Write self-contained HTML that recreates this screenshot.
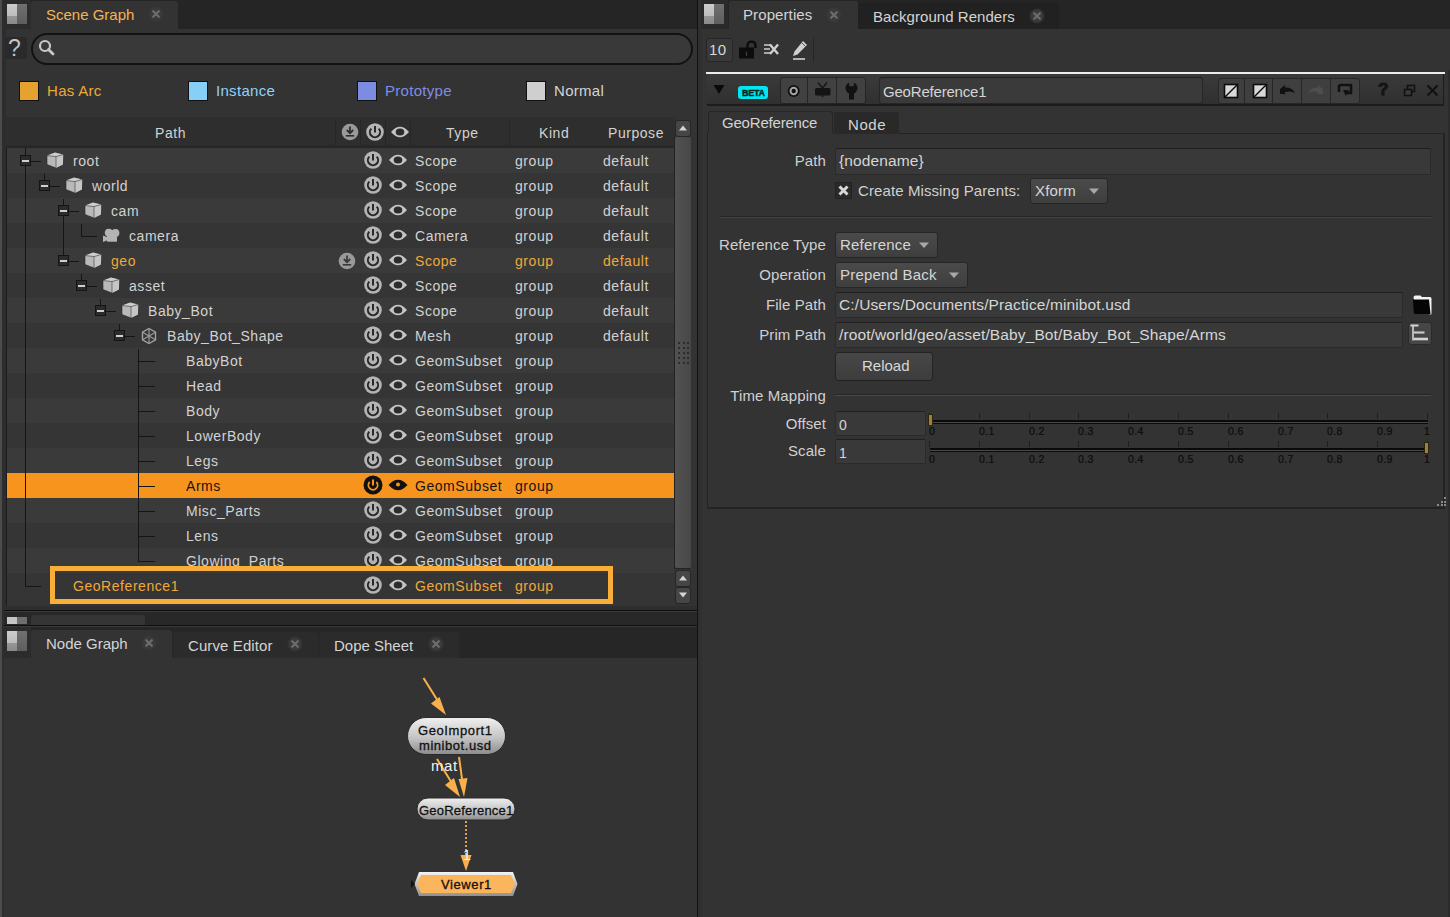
<!DOCTYPE html><html><head><meta charset="utf-8"><style>
*{margin:0;padding:0;box-sizing:border-box}
html,body{width:1450px;height:917px;overflow:hidden;background:#333333}
body{position:relative;font-family:"Liberation Sans", sans-serif;font-size:14px;color:#d2d2d2}
body div{position:absolute}
.t{white-space:pre;line-height:16px;letter-spacing:0.55px}
.s{white-space:pre;line-height:12px;font-size:10.5px;color:#0c0c0c;letter-spacing:0.4px;-webkit-text-stroke:0.2px #0c0c0c}
</style></head><body><div style="left:0px;top:0px;width:2px;height:917px;background:#4c4c4c"></div><div style="left:2px;top:0px;width:4px;height:917px;background:#2d2d2d"></div><div style="left:4px;top:0px;width:693px;height:29px;background:#252525"></div><div style="left:4px;top:0px;width:27px;height:29px;background:#2c2c2c"></div><div style="left:7px;top:4px;width:10px;height:12px;background:linear-gradient(#cdcdcd,#bdbdbd)"></div><div style="left:7px;top:16px;width:10px;height:8px;background:linear-gradient(#969696,#8a8a8a)"></div><div style="left:17px;top:4px;width:10px;height:20px;background:linear-gradient(#707070,#5e5e5e)"></div><div style="left:31px;top:1px;width:147px;height:28px;background:#333333;border-radius:3px 3px 0 0"></div><div class="t" style="left:46px;top:7px;color:#f4b456;font-size:15px;letter-spacing:0px">Scene Graph</div><div style="left:148px;top:6px;width:16px;height:16px;background:radial-gradient(circle,#3a3a3a 50%,transparent 72%);border-radius:8px"></div><svg style="position:absolute;left:152px;top:10px;" width="8" height="8" viewBox="0 0 8 8"><path d="M1.2 1.2L6.8 6.8M6.8 1.2L1.2 6.8" stroke="#6c6c6c" stroke-width="2.2" stroke-linecap="round"/></svg><div style="left:5px;top:37px;width:22px;height:22px;background:#2a2a2a;border-radius:3px"></div><div class="t" style="left:8px;top:37px;color:#c4c4c4;font-size:23px;letter-spacing:0;line-height:22px">?</div><div style="left:31px;top:33px;width:662px;height:32px;background:#393939;border:2px solid #121212;border-radius:16px"></div><svg style="position:absolute;left:38px;top:39px;" width="18" height="18" viewBox="0 0 18 18"><circle cx="7" cy="7" r="5" fill="none" stroke="#c8c8c8" stroke-width="2.2"/><path d="M10.5 10.5L15 15" stroke="#c8c8c8" stroke-width="2.8" stroke-linecap="round"/></svg><div style="left:19px;top:81px;width:20px;height:20px;background:#e6a22e;border:1px solid #111"></div><div class="t" style="left:47px;top:83px;color:#eda838;font-size:15px;letter-spacing:0.3px">Has Arc</div><div style="left:188px;top:81px;width:20px;height:20px;background:#86d0f8;border:1px solid #111"></div><div class="t" style="left:216px;top:83px;color:#8ed2fa;font-size:15px;letter-spacing:0.3px">Instance</div><div style="left:357px;top:81px;width:20px;height:20px;background:#7c8ce0;border:1px solid #111"></div><div class="t" style="left:385px;top:83px;color:#7f8de6;font-size:15px;letter-spacing:0.3px">Prototype</div><div style="left:526px;top:81px;width:20px;height:20px;background:#cfcfcf;border:1px solid #111"></div><div class="t" style="left:554px;top:83px;color:#d4d4d4;font-size:15px;letter-spacing:0.3px">Normal</div><div style="left:6px;top:118px;width:669px;height:488px;background:#353535"></div><div style="left:6px;top:145px;width:1px;height:461px;background:#1c1c1c"></div><div style="left:6px;top:117px;width:669px;height:28px;background:#2e2e2e"></div><div style="left:6px;top:145px;width:669px;height:3px;background:linear-gradient(#2a2a2a,#252525)"></div><div style="left:335px;top:120px;width:1px;height:25px;background:#272727"></div><div style="left:360px;top:120px;width:1px;height:25px;background:#272727"></div><div style="left:385px;top:120px;width:1px;height:25px;background:#272727"></div><div style="left:410px;top:120px;width:1px;height:25px;background:#272727"></div><div style="left:509px;top:120px;width:1px;height:25px;background:#272727"></div><div class="t" style="left:155px;top:125px;">Path</div><div class="t" style="left:446px;top:125px;">Type</div><div class="t" style="left:539px;top:125px;">Kind</div><div class="t" style="left:608px;top:125px;">Purpose</div><div style="left:7px;top:148px;width:667px;height:25px;background:#3a3a3a"></div><div style="left:7px;top:173px;width:667px;height:25px;background:#353535"></div><div style="left:7px;top:198px;width:667px;height:25px;background:#3a3a3a"></div><div style="left:7px;top:223px;width:667px;height:25px;background:#353535"></div><div style="left:7px;top:248px;width:667px;height:25px;background:#3a3a3a"></div><div style="left:7px;top:273px;width:667px;height:25px;background:#353535"></div><div style="left:7px;top:298px;width:667px;height:25px;background:#3a3a3a"></div><div style="left:7px;top:323px;width:667px;height:25px;background:#353535"></div><div style="left:7px;top:348px;width:667px;height:25px;background:#3a3a3a"></div><div style="left:7px;top:373px;width:667px;height:25px;background:#353535"></div><div style="left:7px;top:398px;width:667px;height:25px;background:#3a3a3a"></div><div style="left:7px;top:423px;width:667px;height:25px;background:#353535"></div><div style="left:7px;top:448px;width:667px;height:25px;background:#3a3a3a"></div><div style="left:7px;top:473px;width:667px;height:25px;background:#f7941e"></div><div style="left:7px;top:498px;width:667px;height:25px;background:#3a3a3a"></div><div style="left:7px;top:523px;width:667px;height:25px;background:#353535"></div><div style="left:7px;top:548px;width:667px;height:25px;background:#3a3a3a"></div><div style="left:7px;top:573px;width:667px;height:25px;background:#353535"></div><div style="left:25px;top:148px;width:1px;height:439px;background:#151515"></div><div style="left:25px;top:586px;width:16px;height:1px;background:#151515"></div><div style="left:25px;top:149px;width:1px;height:12px;background:#151515"></div><div style="left:25px;top:161px;width:16px;height:1px;background:#151515"></div><div style="left:44px;top:174px;width:1px;height:12px;background:#151515"></div><div style="left:44px;top:186px;width:16px;height:1px;background:#151515"></div><div style="left:63px;top:199px;width:1px;height:12px;background:#151515"></div><div style="left:63px;top:211px;width:16px;height:1px;background:#151515"></div><div style="left:81px;top:224px;width:1px;height:12px;background:#151515"></div><div style="left:81px;top:236px;width:16px;height:1px;background:#151515"></div><div style="left:63px;top:249px;width:1px;height:12px;background:#151515"></div><div style="left:63px;top:261px;width:16px;height:1px;background:#151515"></div><div style="left:81px;top:274px;width:1px;height:12px;background:#151515"></div><div style="left:81px;top:286px;width:16px;height:1px;background:#151515"></div><div style="left:100px;top:299px;width:1px;height:12px;background:#151515"></div><div style="left:100px;top:311px;width:16px;height:1px;background:#151515"></div><div style="left:119px;top:324px;width:1px;height:12px;background:#151515"></div><div style="left:119px;top:336px;width:16px;height:1px;background:#151515"></div><div style="left:63px;top:211px;width:1px;height:50px;background:#151515"></div><div style="left:81px;top:224px;width:1px;height:13px;background:#151515"></div><div style="left:81px;top:236px;width:16px;height:1px;background:#151515"></div><div style="left:138px;top:349px;width:1px;height:213px;background:#151515"></div><div style="left:138px;top:361px;width:17px;height:1px;background:#151515"></div><div style="left:138px;top:386px;width:17px;height:1px;background:#151515"></div><div style="left:138px;top:411px;width:17px;height:1px;background:#151515"></div><div style="left:138px;top:436px;width:17px;height:1px;background:#151515"></div><div style="left:138px;top:461px;width:17px;height:1px;background:#151515"></div><div style="left:138px;top:486px;width:17px;height:1px;background:#151515"></div><div style="left:138px;top:511px;width:17px;height:1px;background:#151515"></div><div style="left:138px;top:536px;width:17px;height:1px;background:#151515"></div><div style="left:138px;top:561px;width:17px;height:1px;background:#151515"></div><div style="left:20px;top:155px;width:11px;height:11px;background:#2c2c2c;border:1.5px solid #141414"></div><div style="left:22px;top:160px;width:7px;height:2px;background:#cfcfcf"></div><div style="left:39px;top:180px;width:11px;height:11px;background:#2c2c2c;border:1.5px solid #141414"></div><div style="left:41px;top:185px;width:7px;height:2px;background:#cfcfcf"></div><div style="left:58px;top:205px;width:11px;height:11px;background:#2c2c2c;border:1.5px solid #141414"></div><div style="left:60px;top:210px;width:7px;height:2px;background:#cfcfcf"></div><div style="left:58px;top:255px;width:11px;height:11px;background:#2c2c2c;border:1.5px solid #141414"></div><div style="left:60px;top:260px;width:7px;height:2px;background:#cfcfcf"></div><div style="left:76px;top:280px;width:11px;height:11px;background:#2c2c2c;border:1.5px solid #141414"></div><div style="left:78px;top:285px;width:7px;height:2px;background:#cfcfcf"></div><div style="left:95px;top:305px;width:11px;height:11px;background:#2c2c2c;border:1.5px solid #141414"></div><div style="left:97px;top:310px;width:7px;height:2px;background:#cfcfcf"></div><div style="left:114px;top:330px;width:11px;height:11px;background:#2c2c2c;border:1.5px solid #141414"></div><div style="left:116px;top:335px;width:7px;height:2px;background:#cfcfcf"></div><svg style="position:absolute;left:46px;top:152px;" width="18" height="18" viewBox="0 0 18 18"><path d="M1 3.5L9 0.5L17.2 2.5L17 12.5L10 16L1 12.5Z" fill="#b9b9b9" stroke="#2a2a2a" stroke-width="0.6"/><path d="M1 3.5L9 0.5L17.2 2.5L10 4.6Z" fill="#cdcdcd"/><path d="M10 4.6L17.2 2.5L17 12.5L10 16Z" fill="#c6c6c6"/><path d="M1 3.5L10 4.6L17.2 2.5M10 4.6V16" fill="none" stroke="#4a4a4a" stroke-width="0.7"/></svg><div class="t" style="left:73px;top:153px;color:#d2d2d2">root</div><div class="t" style="left:415px;top:153px;color:#d2d2d2">Scope</div><div class="t" style="left:515px;top:153px;color:#d2d2d2">group</div><div class="t" style="left:603px;top:153px;color:#d2d2d2">default</div><svg style="position:absolute;left:363px;top:150px;" width="20" height="20" viewBox="0 0 20 20"><circle cx="10" cy="10" r="8.8" fill="#b4b4b4"/><path d="M6.3 6.6A5.1 5.1 0 1 0 13.7 6.6" fill="none" stroke="#282828" stroke-width="2"/><path d="M10 4V10.5" stroke="#282828" stroke-width="2"/></svg><svg style="position:absolute;left:388px;top:153px;" width="20" height="14" viewBox="0 0 20 14"><path d="M1 7Q10 -3.5 19 7Q10 17.5 1 7Z" fill="#c4c4c4"/><ellipse cx="10" cy="7" rx="4.3" ry="3.6" fill="#2c2c2c"/></svg><svg style="position:absolute;left:65px;top:177px;" width="18" height="18" viewBox="0 0 18 18"><path d="M1 3.5L9 0.5L17.2 2.5L17 12.5L10 16L1 12.5Z" fill="#b9b9b9" stroke="#2a2a2a" stroke-width="0.6"/><path d="M1 3.5L9 0.5L17.2 2.5L10 4.6Z" fill="#cdcdcd"/><path d="M10 4.6L17.2 2.5L17 12.5L10 16Z" fill="#c6c6c6"/><path d="M1 3.5L10 4.6L17.2 2.5M10 4.6V16" fill="none" stroke="#4a4a4a" stroke-width="0.7"/></svg><div class="t" style="left:92px;top:178px;color:#d2d2d2">world</div><div class="t" style="left:415px;top:178px;color:#d2d2d2">Scope</div><div class="t" style="left:515px;top:178px;color:#d2d2d2">group</div><div class="t" style="left:603px;top:178px;color:#d2d2d2">default</div><svg style="position:absolute;left:363px;top:175px;" width="20" height="20" viewBox="0 0 20 20"><circle cx="10" cy="10" r="8.8" fill="#b4b4b4"/><path d="M6.3 6.6A5.1 5.1 0 1 0 13.7 6.6" fill="none" stroke="#282828" stroke-width="2"/><path d="M10 4V10.5" stroke="#282828" stroke-width="2"/></svg><svg style="position:absolute;left:388px;top:178px;" width="20" height="14" viewBox="0 0 20 14"><path d="M1 7Q10 -3.5 19 7Q10 17.5 1 7Z" fill="#c4c4c4"/><ellipse cx="10" cy="7" rx="4.3" ry="3.6" fill="#2c2c2c"/></svg><svg style="position:absolute;left:84px;top:202px;" width="18" height="18" viewBox="0 0 18 18"><path d="M1 3.5L9 0.5L17.2 2.5L17 12.5L10 16L1 12.5Z" fill="#b9b9b9" stroke="#2a2a2a" stroke-width="0.6"/><path d="M1 3.5L9 0.5L17.2 2.5L10 4.6Z" fill="#cdcdcd"/><path d="M10 4.6L17.2 2.5L17 12.5L10 16Z" fill="#c6c6c6"/><path d="M1 3.5L10 4.6L17.2 2.5M10 4.6V16" fill="none" stroke="#4a4a4a" stroke-width="0.7"/></svg><div class="t" style="left:111px;top:203px;color:#d2d2d2">cam</div><div class="t" style="left:415px;top:203px;color:#d2d2d2">Scope</div><div class="t" style="left:515px;top:203px;color:#d2d2d2">group</div><div class="t" style="left:603px;top:203px;color:#d2d2d2">default</div><svg style="position:absolute;left:363px;top:200px;" width="20" height="20" viewBox="0 0 20 20"><circle cx="10" cy="10" r="8.8" fill="#b4b4b4"/><path d="M6.3 6.6A5.1 5.1 0 1 0 13.7 6.6" fill="none" stroke="#282828" stroke-width="2"/><path d="M10 4V10.5" stroke="#282828" stroke-width="2"/></svg><svg style="position:absolute;left:388px;top:203px;" width="20" height="14" viewBox="0 0 20 14"><path d="M1 7Q10 -3.5 19 7Q10 17.5 1 7Z" fill="#c4c4c4"/><ellipse cx="10" cy="7" rx="4.3" ry="3.6" fill="#2c2c2c"/></svg><svg style="position:absolute;left:102px;top:227px;" width="18" height="18" viewBox="0 0 18 18"><circle cx="6.8" cy="5.8" r="4" fill="#b4b4b4"/><circle cx="13.4" cy="6" r="4" fill="#b4b4b4"/><rect x="5" y="7.5" width="10" height="7.2" fill="#b4b4b4"/><path d="M1 8.5L6 10.5V13L1 15Z" fill="#b4b4b4"/></svg><div class="t" style="left:129px;top:228px;color:#d2d2d2">camera</div><div class="t" style="left:415px;top:228px;color:#d2d2d2">Camera</div><div class="t" style="left:515px;top:228px;color:#d2d2d2">group</div><div class="t" style="left:603px;top:228px;color:#d2d2d2">default</div><svg style="position:absolute;left:363px;top:225px;" width="20" height="20" viewBox="0 0 20 20"><circle cx="10" cy="10" r="8.8" fill="#b4b4b4"/><path d="M6.3 6.6A5.1 5.1 0 1 0 13.7 6.6" fill="none" stroke="#282828" stroke-width="2"/><path d="M10 4V10.5" stroke="#282828" stroke-width="2"/></svg><svg style="position:absolute;left:388px;top:228px;" width="20" height="14" viewBox="0 0 20 14"><path d="M1 7Q10 -3.5 19 7Q10 17.5 1 7Z" fill="#c4c4c4"/><ellipse cx="10" cy="7" rx="4.3" ry="3.6" fill="#2c2c2c"/></svg><svg style="position:absolute;left:84px;top:252px;" width="18" height="18" viewBox="0 0 18 18"><path d="M1 3.5L9 0.5L17.2 2.5L17 12.5L10 16L1 12.5Z" fill="#b9b9b9" stroke="#2a2a2a" stroke-width="0.6"/><path d="M1 3.5L9 0.5L17.2 2.5L10 4.6Z" fill="#cdcdcd"/><path d="M10 4.6L17.2 2.5L17 12.5L10 16Z" fill="#c6c6c6"/><path d="M1 3.5L10 4.6L17.2 2.5M10 4.6V16" fill="none" stroke="#4a4a4a" stroke-width="0.7"/></svg><div class="t" style="left:111px;top:253px;color:#f0a83a">geo</div><div class="t" style="left:415px;top:253px;color:#f0a83a">Scope</div><div class="t" style="left:515px;top:253px;color:#f0a83a">group</div><div class="t" style="left:603px;top:253px;color:#f0a83a">default</div><svg style="position:absolute;left:363px;top:250px;" width="20" height="20" viewBox="0 0 20 20"><circle cx="10" cy="10" r="8.8" fill="#b4b4b4"/><path d="M6.3 6.6A5.1 5.1 0 1 0 13.7 6.6" fill="none" stroke="#282828" stroke-width="2"/><path d="M10 4V10.5" stroke="#282828" stroke-width="2"/></svg><svg style="position:absolute;left:388px;top:253px;" width="20" height="14" viewBox="0 0 20 14"><path d="M1 7Q10 -3.5 19 7Q10 17.5 1 7Z" fill="#c4c4c4"/><ellipse cx="10" cy="7" rx="4.3" ry="3.6" fill="#2c2c2c"/></svg><svg style="position:absolute;left:102px;top:277px;" width="18" height="18" viewBox="0 0 18 18"><path d="M1 3.5L9 0.5L17.2 2.5L17 12.5L10 16L1 12.5Z" fill="#b9b9b9" stroke="#2a2a2a" stroke-width="0.6"/><path d="M1 3.5L9 0.5L17.2 2.5L10 4.6Z" fill="#cdcdcd"/><path d="M10 4.6L17.2 2.5L17 12.5L10 16Z" fill="#c6c6c6"/><path d="M1 3.5L10 4.6L17.2 2.5M10 4.6V16" fill="none" stroke="#4a4a4a" stroke-width="0.7"/></svg><div class="t" style="left:129px;top:278px;color:#d2d2d2">asset</div><div class="t" style="left:415px;top:278px;color:#d2d2d2">Scope</div><div class="t" style="left:515px;top:278px;color:#d2d2d2">group</div><div class="t" style="left:603px;top:278px;color:#d2d2d2">default</div><svg style="position:absolute;left:363px;top:275px;" width="20" height="20" viewBox="0 0 20 20"><circle cx="10" cy="10" r="8.8" fill="#b4b4b4"/><path d="M6.3 6.6A5.1 5.1 0 1 0 13.7 6.6" fill="none" stroke="#282828" stroke-width="2"/><path d="M10 4V10.5" stroke="#282828" stroke-width="2"/></svg><svg style="position:absolute;left:388px;top:278px;" width="20" height="14" viewBox="0 0 20 14"><path d="M1 7Q10 -3.5 19 7Q10 17.5 1 7Z" fill="#c4c4c4"/><ellipse cx="10" cy="7" rx="4.3" ry="3.6" fill="#2c2c2c"/></svg><svg style="position:absolute;left:121px;top:302px;" width="18" height="18" viewBox="0 0 18 18"><path d="M1 3.5L9 0.5L17.2 2.5L17 12.5L10 16L1 12.5Z" fill="#b9b9b9" stroke="#2a2a2a" stroke-width="0.6"/><path d="M1 3.5L9 0.5L17.2 2.5L10 4.6Z" fill="#cdcdcd"/><path d="M10 4.6L17.2 2.5L17 12.5L10 16Z" fill="#c6c6c6"/><path d="M1 3.5L10 4.6L17.2 2.5M10 4.6V16" fill="none" stroke="#4a4a4a" stroke-width="0.7"/></svg><div class="t" style="left:148px;top:303px;color:#d2d2d2">Baby_Bot</div><div class="t" style="left:415px;top:303px;color:#d2d2d2">Scope</div><div class="t" style="left:515px;top:303px;color:#d2d2d2">group</div><div class="t" style="left:603px;top:303px;color:#d2d2d2">default</div><svg style="position:absolute;left:363px;top:300px;" width="20" height="20" viewBox="0 0 20 20"><circle cx="10" cy="10" r="8.8" fill="#b4b4b4"/><path d="M6.3 6.6A5.1 5.1 0 1 0 13.7 6.6" fill="none" stroke="#282828" stroke-width="2"/><path d="M10 4V10.5" stroke="#282828" stroke-width="2"/></svg><svg style="position:absolute;left:388px;top:303px;" width="20" height="14" viewBox="0 0 20 14"><path d="M1 7Q10 -3.5 19 7Q10 17.5 1 7Z" fill="#c4c4c4"/><ellipse cx="10" cy="7" rx="4.3" ry="3.6" fill="#2c2c2c"/></svg><svg style="position:absolute;left:140px;top:327px;" width="18" height="18" viewBox="0 0 18 18"><path d="M9 1.5L15.5 5.2V12.8L9 16.5L2.5 12.8V5.2Z" fill="none" stroke="#a0a0a0" stroke-width="1.4"/><path d="M9 1.5V16.5M2.5 5.2L15.5 12.8M15.5 5.2L2.5 12.8" stroke="#9a9a9a" stroke-width="1.2"/></svg><div class="t" style="left:167px;top:328px;color:#d2d2d2">Baby_Bot_Shape</div><div class="t" style="left:415px;top:328px;color:#d2d2d2">Mesh</div><div class="t" style="left:515px;top:328px;color:#d2d2d2">group</div><div class="t" style="left:603px;top:328px;color:#d2d2d2">default</div><svg style="position:absolute;left:363px;top:325px;" width="20" height="20" viewBox="0 0 20 20"><circle cx="10" cy="10" r="8.8" fill="#b4b4b4"/><path d="M6.3 6.6A5.1 5.1 0 1 0 13.7 6.6" fill="none" stroke="#282828" stroke-width="2"/><path d="M10 4V10.5" stroke="#282828" stroke-width="2"/></svg><svg style="position:absolute;left:388px;top:328px;" width="20" height="14" viewBox="0 0 20 14"><path d="M1 7Q10 -3.5 19 7Q10 17.5 1 7Z" fill="#c4c4c4"/><ellipse cx="10" cy="7" rx="4.3" ry="3.6" fill="#2c2c2c"/></svg><div class="t" style="left:186px;top:353px;color:#d2d2d2">BabyBot</div><div class="t" style="left:415px;top:353px;color:#d2d2d2">GeomSubset</div><div class="t" style="left:515px;top:353px;color:#d2d2d2">group</div><svg style="position:absolute;left:363px;top:350px;" width="20" height="20" viewBox="0 0 20 20"><circle cx="10" cy="10" r="8.8" fill="#b4b4b4"/><path d="M6.3 6.6A5.1 5.1 0 1 0 13.7 6.6" fill="none" stroke="#282828" stroke-width="2"/><path d="M10 4V10.5" stroke="#282828" stroke-width="2"/></svg><svg style="position:absolute;left:388px;top:353px;" width="20" height="14" viewBox="0 0 20 14"><path d="M1 7Q10 -3.5 19 7Q10 17.5 1 7Z" fill="#c4c4c4"/><ellipse cx="10" cy="7" rx="4.3" ry="3.6" fill="#2c2c2c"/></svg><div class="t" style="left:186px;top:378px;color:#d2d2d2">Head</div><div class="t" style="left:415px;top:378px;color:#d2d2d2">GeomSubset</div><div class="t" style="left:515px;top:378px;color:#d2d2d2">group</div><svg style="position:absolute;left:363px;top:375px;" width="20" height="20" viewBox="0 0 20 20"><circle cx="10" cy="10" r="8.8" fill="#b4b4b4"/><path d="M6.3 6.6A5.1 5.1 0 1 0 13.7 6.6" fill="none" stroke="#282828" stroke-width="2"/><path d="M10 4V10.5" stroke="#282828" stroke-width="2"/></svg><svg style="position:absolute;left:388px;top:378px;" width="20" height="14" viewBox="0 0 20 14"><path d="M1 7Q10 -3.5 19 7Q10 17.5 1 7Z" fill="#c4c4c4"/><ellipse cx="10" cy="7" rx="4.3" ry="3.6" fill="#2c2c2c"/></svg><div class="t" style="left:186px;top:403px;color:#d2d2d2">Body</div><div class="t" style="left:415px;top:403px;color:#d2d2d2">GeomSubset</div><div class="t" style="left:515px;top:403px;color:#d2d2d2">group</div><svg style="position:absolute;left:363px;top:400px;" width="20" height="20" viewBox="0 0 20 20"><circle cx="10" cy="10" r="8.8" fill="#b4b4b4"/><path d="M6.3 6.6A5.1 5.1 0 1 0 13.7 6.6" fill="none" stroke="#282828" stroke-width="2"/><path d="M10 4V10.5" stroke="#282828" stroke-width="2"/></svg><svg style="position:absolute;left:388px;top:403px;" width="20" height="14" viewBox="0 0 20 14"><path d="M1 7Q10 -3.5 19 7Q10 17.5 1 7Z" fill="#c4c4c4"/><ellipse cx="10" cy="7" rx="4.3" ry="3.6" fill="#2c2c2c"/></svg><div class="t" style="left:186px;top:428px;color:#d2d2d2">LowerBody</div><div class="t" style="left:415px;top:428px;color:#d2d2d2">GeomSubset</div><div class="t" style="left:515px;top:428px;color:#d2d2d2">group</div><svg style="position:absolute;left:363px;top:425px;" width="20" height="20" viewBox="0 0 20 20"><circle cx="10" cy="10" r="8.8" fill="#b4b4b4"/><path d="M6.3 6.6A5.1 5.1 0 1 0 13.7 6.6" fill="none" stroke="#282828" stroke-width="2"/><path d="M10 4V10.5" stroke="#282828" stroke-width="2"/></svg><svg style="position:absolute;left:388px;top:428px;" width="20" height="14" viewBox="0 0 20 14"><path d="M1 7Q10 -3.5 19 7Q10 17.5 1 7Z" fill="#c4c4c4"/><ellipse cx="10" cy="7" rx="4.3" ry="3.6" fill="#2c2c2c"/></svg><div class="t" style="left:186px;top:453px;color:#d2d2d2">Legs</div><div class="t" style="left:415px;top:453px;color:#d2d2d2">GeomSubset</div><div class="t" style="left:515px;top:453px;color:#d2d2d2">group</div><svg style="position:absolute;left:363px;top:450px;" width="20" height="20" viewBox="0 0 20 20"><circle cx="10" cy="10" r="8.8" fill="#b4b4b4"/><path d="M6.3 6.6A5.1 5.1 0 1 0 13.7 6.6" fill="none" stroke="#282828" stroke-width="2"/><path d="M10 4V10.5" stroke="#282828" stroke-width="2"/></svg><svg style="position:absolute;left:388px;top:453px;" width="20" height="14" viewBox="0 0 20 14"><path d="M1 7Q10 -3.5 19 7Q10 17.5 1 7Z" fill="#c4c4c4"/><ellipse cx="10" cy="7" rx="4.3" ry="3.6" fill="#2c2c2c"/></svg><div class="t" style="left:186px;top:478px;color:#151515">Arms</div><div class="t" style="left:415px;top:478px;color:#151515">GeomSubset</div><div class="t" style="left:515px;top:478px;color:#151515">group</div><svg style="position:absolute;left:363px;top:475px;" width="20" height="20" viewBox="0 0 20 20"><circle cx="10" cy="10" r="9.5" fill="#111"/><path d="M6.7 7A4.6 4.6 0 1 0 13.3 7" fill="none" stroke="#f7941e" stroke-width="1.8"/><path d="M10 4.5V10.5" stroke="#f7941e" stroke-width="2"/></svg><svg style="position:absolute;left:388px;top:478px;" width="20" height="14" viewBox="0 0 20 14"><path d="M0.5 7Q10 -3.5 19.5 7Q10 17.5 0.5 7Z" fill="#111"/><circle cx="10" cy="6.5" r="2" fill="#f7941e"/></svg><div class="t" style="left:186px;top:503px;color:#d2d2d2">Misc_Parts</div><div class="t" style="left:415px;top:503px;color:#d2d2d2">GeomSubset</div><div class="t" style="left:515px;top:503px;color:#d2d2d2">group</div><svg style="position:absolute;left:363px;top:500px;" width="20" height="20" viewBox="0 0 20 20"><circle cx="10" cy="10" r="8.8" fill="#b4b4b4"/><path d="M6.3 6.6A5.1 5.1 0 1 0 13.7 6.6" fill="none" stroke="#282828" stroke-width="2"/><path d="M10 4V10.5" stroke="#282828" stroke-width="2"/></svg><svg style="position:absolute;left:388px;top:503px;" width="20" height="14" viewBox="0 0 20 14"><path d="M1 7Q10 -3.5 19 7Q10 17.5 1 7Z" fill="#c4c4c4"/><ellipse cx="10" cy="7" rx="4.3" ry="3.6" fill="#2c2c2c"/></svg><div class="t" style="left:186px;top:528px;color:#d2d2d2">Lens</div><div class="t" style="left:415px;top:528px;color:#d2d2d2">GeomSubset</div><div class="t" style="left:515px;top:528px;color:#d2d2d2">group</div><svg style="position:absolute;left:363px;top:525px;" width="20" height="20" viewBox="0 0 20 20"><circle cx="10" cy="10" r="8.8" fill="#b4b4b4"/><path d="M6.3 6.6A5.1 5.1 0 1 0 13.7 6.6" fill="none" stroke="#282828" stroke-width="2"/><path d="M10 4V10.5" stroke="#282828" stroke-width="2"/></svg><svg style="position:absolute;left:388px;top:528px;" width="20" height="14" viewBox="0 0 20 14"><path d="M1 7Q10 -3.5 19 7Q10 17.5 1 7Z" fill="#c4c4c4"/><ellipse cx="10" cy="7" rx="4.3" ry="3.6" fill="#2c2c2c"/></svg><div class="t" style="left:186px;top:553px;color:#d2d2d2">Glowing_Parts</div><div class="t" style="left:415px;top:553px;color:#d2d2d2">GeomSubset</div><div class="t" style="left:515px;top:553px;color:#d2d2d2">group</div><svg style="position:absolute;left:363px;top:550px;" width="20" height="20" viewBox="0 0 20 20"><circle cx="10" cy="10" r="8.8" fill="#b4b4b4"/><path d="M6.3 6.6A5.1 5.1 0 1 0 13.7 6.6" fill="none" stroke="#282828" stroke-width="2"/><path d="M10 4V10.5" stroke="#282828" stroke-width="2"/></svg><svg style="position:absolute;left:388px;top:553px;" width="20" height="14" viewBox="0 0 20 14"><path d="M1 7Q10 -3.5 19 7Q10 17.5 1 7Z" fill="#c4c4c4"/><ellipse cx="10" cy="7" rx="4.3" ry="3.6" fill="#2c2c2c"/></svg><div class="t" style="left:73px;top:578px;color:#f0a83a">GeoReference1</div><div class="t" style="left:415px;top:578px;color:#f0a83a">GeomSubset</div><div class="t" style="left:515px;top:578px;color:#f0a83a">group</div><svg style="position:absolute;left:363px;top:575px;" width="20" height="20" viewBox="0 0 20 20"><circle cx="10" cy="10" r="8.8" fill="#b4b4b4"/><path d="M6.3 6.6A5.1 5.1 0 1 0 13.7 6.6" fill="none" stroke="#282828" stroke-width="2"/><path d="M10 4V10.5" stroke="#282828" stroke-width="2"/></svg><svg style="position:absolute;left:388px;top:578px;" width="20" height="14" viewBox="0 0 20 14"><path d="M1 7Q10 -3.5 19 7Q10 17.5 1 7Z" fill="#c4c4c4"/><ellipse cx="10" cy="7" rx="4.3" ry="3.6" fill="#2c2c2c"/></svg><svg style="position:absolute;left:340px;top:122px;" width="20" height="20" viewBox="0 0 20 20"><circle cx="10" cy="10" r="8.3" fill="#9a9a9a"/><path d="M10 4.5V11M6.8 8L10 11.2L13.2 8" fill="none" stroke="#2e2e2e" stroke-width="1.8"/><path d="M5.8 13.8H14.2" stroke="#2e2e2e" stroke-width="1.6"/></svg><svg style="position:absolute;left:365px;top:122px;" width="20" height="20" viewBox="0 0 20 20"><circle cx="10" cy="10" r="8.8" fill="#b4b4b4"/><path d="M6.3 6.6A5.1 5.1 0 1 0 13.7 6.6" fill="none" stroke="#282828" stroke-width="2"/><path d="M10 4V10.5" stroke="#282828" stroke-width="2"/></svg><svg style="position:absolute;left:390px;top:125px;" width="20" height="14" viewBox="0 0 20 14"><path d="M1 7Q10 -3.5 19 7Q10 17.5 1 7Z" fill="#c4c4c4"/><ellipse cx="10" cy="7" rx="4.3" ry="3.6" fill="#2c2c2c"/></svg><svg style="position:absolute;left:337px;top:251px;" width="20" height="20" viewBox="0 0 20 20"><circle cx="10" cy="10" r="8.3" fill="#9a9a9a"/><path d="M10 4.5V11M6.8 8L10 11.2L13.2 8" fill="none" stroke="#3a3a3a" stroke-width="1.8"/><path d="M5.8 13.8H14.2" stroke="#3a3a3a" stroke-width="1.6"/></svg><div style="left:50px;top:566px;width:563px;height:38px;border:5px solid #f9ae3a"></div><div style="left:675px;top:120px;width:16px;height:17px;background:#464646;border-radius:3px;border:1px solid #262626"></div><svg style="position:absolute;left:677px;top:122px;" width="12" height="12" viewBox="0 0 12 12"><path d="M2 8.5L6 3.5L10 8.5Z" fill="#d4d4d4"/></svg><div style="left:674px;top:137px;width:1px;height:432px;background:#222"></div><div style="left:675px;top:137px;width:16px;height:432px;background:linear-gradient(90deg,#525252,#474747);border-radius:2px;border-bottom:1px solid #222"></div><div style="left:678px;top:342px;width:2px;height:2px;background:#2c2c2c"></div><div style="left:683px;top:342px;width:2px;height:2px;background:#2c2c2c"></div><div style="left:687px;top:342px;width:2px;height:2px;background:#2c2c2c"></div><div style="left:678px;top:347px;width:2px;height:2px;background:#2c2c2c"></div><div style="left:683px;top:347px;width:2px;height:2px;background:#2c2c2c"></div><div style="left:687px;top:347px;width:2px;height:2px;background:#2c2c2c"></div><div style="left:678px;top:352px;width:2px;height:2px;background:#2c2c2c"></div><div style="left:683px;top:352px;width:2px;height:2px;background:#2c2c2c"></div><div style="left:687px;top:352px;width:2px;height:2px;background:#2c2c2c"></div><div style="left:678px;top:357px;width:2px;height:2px;background:#2c2c2c"></div><div style="left:683px;top:357px;width:2px;height:2px;background:#2c2c2c"></div><div style="left:687px;top:357px;width:2px;height:2px;background:#2c2c2c"></div><div style="left:678px;top:362px;width:2px;height:2px;background:#2c2c2c"></div><div style="left:683px;top:362px;width:2px;height:2px;background:#2c2c2c"></div><div style="left:687px;top:362px;width:2px;height:2px;background:#2c2c2c"></div><div style="left:675px;top:570px;width:16px;height:17px;background:#464646;border-radius:3px;border:1px solid #262626"></div><svg style="position:absolute;left:677px;top:572px;" width="12" height="12" viewBox="0 0 12 12"><path d="M2 8.5L6 3.5L10 8.5Z" fill="#d4d4d4"/></svg><div style="left:675px;top:587px;width:16px;height:17px;background:#464646;border-radius:3px;border:1px solid #262626"></div><svg style="position:absolute;left:677px;top:589px;" width="12" height="12" viewBox="0 0 12 12"><path d="M2 3.5L6 8.5L10 3.5Z" fill="#d4d4d4"/></svg><div style="left:4px;top:606px;width:693px;height:4px;background:#2e2e2e"></div><div style="left:4px;top:610px;width:693px;height:1px;background:#0e0e0e"></div><div style="left:4px;top:611px;width:693px;height:1px;background:#3a3a3a"></div><div style="left:4px;top:612px;width:693px;height:13px;background:#282828"></div><div style="left:7px;top:617px;width:10px;height:7px;background:#c6c6c6"></div><div style="left:17px;top:617px;width:10px;height:7px;background:#6e6e6e"></div><div style="left:31px;top:615px;width:114px;height:10px;background:#353535;border-radius:3px 3px 0 0"></div><div style="left:4px;top:625px;width:693px;height:1px;background:#0e0e0e"></div><div style="left:4px;top:626px;width:693px;height:1px;background:#3a3a3a"></div><div style="left:4px;top:627px;width:693px;height:31px;background:#262626"></div><div style="left:4px;top:627px;width:27px;height:31px;background:#2c2c2c"></div><div style="left:7px;top:631px;width:10px;height:12px;background:linear-gradient(#cdcdcd,#bdbdbd)"></div><div style="left:7px;top:643px;width:10px;height:8px;background:linear-gradient(#969696,#8a8a8a)"></div><div style="left:17px;top:631px;width:10px;height:20px;background:linear-gradient(#707070,#5e5e5e)"></div><div style="left:31px;top:630px;width:141px;height:28px;background:#333333;border-radius:3px 3px 0 0"></div><div class="t" style="left:46px;top:636px;color:#d4d4d4;font-size:15px;letter-spacing:0px">Node Graph</div><div style="left:141px;top:635px;width:16px;height:16px;background:radial-gradient(circle,#3a3a3a 50%,transparent 72%);border-radius:8px"></div><svg style="position:absolute;left:145px;top:639px;" width="8" height="8" viewBox="0 0 8 8"><path d="M1.2 1.2L6.8 6.8M6.8 1.2L1.2 6.8" stroke="#6c6c6c" stroke-width="2.2" stroke-linecap="round"/></svg><div style="left:173px;top:632px;width:145px;height:26px;background:#2b2b2b;border-radius:3px 3px 0 0"></div><div class="t" style="left:188px;top:638px;color:#d4d4d4;font-size:15px;letter-spacing:0.1px">Curve Editor</div><div style="left:287px;top:636px;width:16px;height:16px;background:radial-gradient(circle,#3a3a3a 50%,transparent 72%);border-radius:8px"></div><svg style="position:absolute;left:291px;top:640px;" width="8" height="8" viewBox="0 0 8 8"><path d="M1.2 1.2L6.8 6.8M6.8 1.2L1.2 6.8" stroke="#6c6c6c" stroke-width="2.2" stroke-linecap="round"/></svg><div style="left:319px;top:632px;width:140px;height:26px;background:#2b2b2b;border-radius:3px 3px 0 0"></div><div class="t" style="left:334px;top:638px;color:#d4d4d4;font-size:15px;letter-spacing:0px">Dope Sheet</div><div style="left:428px;top:636px;width:16px;height:16px;background:radial-gradient(circle,#3a3a3a 50%,transparent 72%);border-radius:8px"></div><svg style="position:absolute;left:432px;top:640px;" width="8" height="8" viewBox="0 0 8 8"><path d="M1.2 1.2L6.8 6.8M6.8 1.2L1.2 6.8" stroke="#6c6c6c" stroke-width="2.2" stroke-linecap="round"/></svg><div style="left:4px;top:658px;width:693px;height:259px;background:#333333"></div><svg style="position:absolute;left:405px;top:670px;" width="120" height="240" viewBox="0 0 120 240">
<defs>
<linearGradient id="ng" x1="0" y1="0" x2="0" y2="1"><stop offset="0" stop-color="#f0f0f0"/><stop offset="0.55" stop-color="#c4c4c4"/><stop offset="1" stop-color="#8c8c8c"/></linearGradient>
<linearGradient id="vg" x1="0" y1="0" x2="0" y2="1"><stop offset="0" stop-color="#f4f4f4"/><stop offset="1" stop-color="#909090"/></linearGradient>
</defs>
<path d="M18.5 8L36 36" stroke="#f9b04c" stroke-width="2"/>
<path d="M34.5 27L41 45L26 33.5Z" fill="#f9b04c"/>
<rect x="2.5" y="47.5" width="98" height="37" rx="18.5" fill="url(#ng)" stroke="#2a2a2a" stroke-width="1"/>
<path d="M32 89L50 118" stroke="#f9b04c" stroke-width="2"/>
<path d="M49 108L55 127L40 115Z" fill="#f9b04c"/>
<path d="M54 87L58 116" stroke="#f9b04c" stroke-width="2"/>
<path d="M53.5 109L62.5 108L59 127Z" fill="#f9b04c"/>
<rect x="12" y="128" width="98" height="22" rx="11" fill="url(#ng)" stroke="#2a2a2a" stroke-width="1"/>
<path d="M61 151V188" stroke="#e0a050" stroke-width="2" stroke-dasharray="2 2"/>
<path d="M55.5 185L66.5 185L61 201Z" fill="#f9b04c"/>
<path d="M14 202H108L112.5 214L108 226H14L9.5 214Z" fill="url(#vg)"/>
<path d="M16 205H106L110 214L106 223H16L12 214Z" fill="#fbb55c"/>
<path d="M6 210L10 214L6 218Z" fill="#111"/>
</svg><div class="t" style="left:418px;top:724px;color:#111;font-size:13px;letter-spacing:0.6px;line-height:14px;-webkit-text-stroke:0.3px #111">GeoImport1</div><div class="t" style="left:419px;top:739px;color:#111;font-size:13px;letter-spacing:0.55px;line-height:14px;-webkit-text-stroke:0.3px #111">minibot.usd</div><div class="t" style="left:431px;top:758px;color:#f4f4f4;font-size:15px;letter-spacing:0.6px;line-height:16px">mat</div><div class="t" style="left:419px;top:804px;color:#111;font-size:13px;letter-spacing:0.2px;line-height:14px;-webkit-text-stroke:0.3px #111">GeoReference1</div><div class="t" style="left:463px;top:848px;color:#f4f4f4;font-size:14px;letter-spacing:0;line-height:14px">1</div><div class="t" style="left:441px;top:878px;color:#111;font-size:13px;letter-spacing:0.6px;line-height:14px;-webkit-text-stroke:0.3px #111">Viewer1</div><div style="left:697px;top:0px;width:1px;height:917px;background:#111"></div><div style="left:698px;top:0px;width:4px;height:917px;background:#303030"></div><div style="left:702px;top:0px;width:748px;height:29px;background:#252525"></div><div style="left:701px;top:0px;width:27px;height:29px;background:#2a2a2a"></div><div style="left:704px;top:4px;width:10px;height:12px;background:linear-gradient(#cdcdcd,#bdbdbd)"></div><div style="left:704px;top:16px;width:10px;height:8px;background:linear-gradient(#969696,#8a8a8a)"></div><div style="left:714px;top:4px;width:10px;height:20px;background:linear-gradient(#707070,#5e5e5e)"></div><div style="left:729px;top:1px;width:129px;height:28px;background:#333333;border-radius:3px 3px 0 0"></div><div class="t" style="left:743px;top:7px;color:#d4d4d4;font-size:15px;letter-spacing:0.1px">Properties</div><div style="left:826px;top:7px;width:16px;height:16px;background:radial-gradient(circle,#3a3a3a 50%,transparent 72%);border-radius:8px"></div><svg style="position:absolute;left:830px;top:11px;" width="8" height="8" viewBox="0 0 8 8"><path d="M1.2 1.2L6.8 6.8M6.8 1.2L1.2 6.8" stroke="#6c6c6c" stroke-width="2.2" stroke-linecap="round"/></svg><div style="left:858px;top:3px;width:201px;height:26px;background:#212121;border-radius:3px 3px 0 0"></div><div class="t" style="left:873px;top:9px;color:#d4d4d4;font-size:15px;letter-spacing:0.05px">Background Renders</div><div style="left:1029px;top:8px;width:16px;height:16px;background:radial-gradient(circle,#3a3a3a 50%,transparent 72%);border-radius:8px"></div><svg style="position:absolute;left:1033px;top:12px;" width="8" height="8" viewBox="0 0 8 8"><path d="M1.2 1.2L6.8 6.8M6.8 1.2L1.2 6.8" stroke="#6c6c6c" stroke-width="2.2" stroke-linecap="round"/></svg><div style="left:702px;top:29px;width:748px;height:888px;background:#333333"></div><div style="left:706px;top:38px;width:27px;height:24px;background:#393939;border-radius:3px;border:1px solid #262626"></div><div class="t" style="left:709px;top:42px;color:#d8d8d8;font-size:15px;letter-spacing:0.3px">10</div><svg style="position:absolute;left:738px;top:40px;" width="22" height="22" viewBox="0 0 22 22"><path d="M9.5 8V5.5A4 4 0 0 1 17.5 5.5V8" fill="none" stroke="#0c0c0c" stroke-width="2.4"/><rect x="1" y="7.5" width="15" height="11" fill="#0c0c0c"/><path d="M8.5 11.5V16" stroke="#3a3a3a" stroke-width="1.4"/></svg><svg style="position:absolute;left:763px;top:41px;" width="18" height="18" viewBox="0 0 18 18"><path d="M1 4H8M1 8H7M1 12H8" stroke="#d0d0d0" stroke-width="1.6"/><path d="M7 3.5L15 13M15 3.5L7 13" stroke="#d0d0d0" stroke-width="2.4"/></svg><svg style="position:absolute;left:790px;top:39px;" width="18" height="22" viewBox="0 0 18 22"><path d="M13 2L17 6L7.5 15.5L3 17L4.5 12.5Z" fill="#d0d0d0"/><path d="M11.5 3.5L15.5 7.5" stroke="#333" stroke-width="0.8"/><path d="M3 20H15" stroke="#d4d4d4" stroke-width="1.6"/></svg><div style="left:813px;top:38px;width:1px;height:24px;background:#262626"></div><div style="left:706px;top:72px;width:739px;height:2px;background:#ededed"></div><div style="left:707px;top:74px;width:737px;height:32px;background:linear-gradient(#3a3a3a,#303030);border-bottom:2px solid #1c1c1c;border-right:1px solid #1c1c1c"></div><svg style="position:absolute;left:712px;top:84px;" width="14" height="12" viewBox="0 0 14 12"><path d="M1.5 1H12.5L7 10Z" fill="#0a0a0a"/></svg><div style="left:738px;top:86px;width:30px;height:13px;background:#00e6f2;border-radius:3px"></div><div class="t" style="left:742px;top:86px;color:#062022;font-size:9px;font-weight:bold;letter-spacing:-0.3px;line-height:14px;-webkit-text-stroke:0.35px #062022">BETA</div><div style="left:780px;top:77px;width:86px;height:27px;background:#414141;border-radius:3px;border:1px solid #242424"></div><div style="left:807px;top:78px;width:1px;height:26px;background:#262626"></div><div style="left:836px;top:78px;width:1px;height:26px;background:#262626"></div><svg style="position:absolute;left:785px;top:82px;" width="18" height="18" viewBox="0 0 18 18"><circle cx="8.7" cy="9" r="6" fill="#111"/><circle cx="8.7" cy="9" r="4.2" fill="#a4a4a4"/><circle cx="8.7" cy="9" r="2.2" fill="#111"/></svg><svg style="position:absolute;left:813px;top:81px;" width="20" height="20" viewBox="0 0 20 20"><rect x="2" y="7" width="15.5" height="7.5" rx="1.5" fill="#141414"/><path d="M5 1.5L9.5 7M14 1.5L9.5 7" stroke="#141414" stroke-width="1.3"/><path d="M8 14.5H11L9.5 16.5Z" fill="#141414"/></svg><svg style="position:absolute;left:842px;top:81px;" width="20" height="20" viewBox="0 0 20 20"><circle cx="9.5" cy="7" r="6" fill="#111"/><path d="M7.2 0V5.2H11.8V0Z" fill="#414141"/><rect x="7" y="10" width="5" height="8.5" fill="#111"/></svg><div style="left:879px;top:77px;width:324px;height:27px;background:#3a3a3a;border-radius:3px;border:1px solid #262626;border-top-color:#1e1e1e"></div><div class="t" style="left:883px;top:84px;color:#d4d4d4;font-size:15px;letter-spacing:-0.2px">GeoReference1</div><div style="left:1218px;top:78px;width:142px;height:26px;background:#3f3f3f;border-radius:3px;border:1px solid #262626"></div><div style="left:1244px;top:78px;width:1px;height:26px;background:#262626"></div><div style="left:1272px;top:78px;width:1px;height:26px;background:#262626"></div><div style="left:1301px;top:78px;width:1px;height:26px;background:#262626"></div><div style="left:1330px;top:78px;width:1px;height:26px;background:#262626"></div><svg style="position:absolute;left:1222px;top:82px;" width="18" height="18" viewBox="0 0 18 18"><rect x="2.5" y="2.5" width="13" height="13" fill="#d8d8d8" stroke="#0c0c0c" stroke-width="1.6"/><path d="M3 15L15 3" stroke="#0c0c0c" stroke-width="1.4"/></svg><svg style="position:absolute;left:1251px;top:82px;" width="18" height="18" viewBox="0 0 18 18"><rect x="2.5" y="2.5" width="13" height="13" fill="#d8d8d8" stroke="#0c0c0c" stroke-width="1.6"/><path d="M3 15L15 3" stroke="#0c0c0c" stroke-width="1.4"/></svg><svg style="position:absolute;left:1279px;top:83px;" width="18" height="16" viewBox="0 0 18 16"><path d="M1 6L6 2V4.5Q13 4 16 10Q12 7.5 6 9V12Z" fill="#111"/><rect x="1" y="6" width="5" height="5" fill="#111"/></svg><svg style="position:absolute;left:1306px;top:83px;" width="18" height="16" viewBox="0 0 18 16"><path d="M17 6L12 2V4.5Q5 4 2 10Q6 7.5 12 9V12Z" fill="#4e4e4e"/><rect x="12" y="6" width="5" height="5" fill="#4e4e4e"/></svg><svg style="position:absolute;left:1336px;top:81px;" width="18" height="20" viewBox="0 0 18 20"><path d="M3 4H15V12H10" fill="none" stroke="#111" stroke-width="2.6"/><path d="M3 4V11" stroke="#111" stroke-width="2.6"/><path d="M7 9L10 15L13 9Z" fill="#111"/></svg><div class="t" style="left:1378px;top:82px;color:#141414;font-size:17px;font-weight:bold;letter-spacing:0;-webkit-text-stroke:0.9px #141414">?</div><svg style="position:absolute;left:1402px;top:83px;" width="16" height="16" viewBox="0 0 16 16"><rect x="5.5" y="2.5" width="7" height="6" fill="none" stroke="#111" stroke-width="1.6"/><rect x="2.5" y="6.5" width="7" height="6" fill="#3a3a3a" stroke="#111" stroke-width="1.6"/></svg><svg style="position:absolute;left:1425px;top:83px;" width="16" height="16" viewBox="0 0 16 16"><path d="M2.5 2.5L12.5 12.5M12.5 2.5L2.5 12.5" stroke="#111" stroke-width="2"/></svg><div style="left:707px;top:133px;width:738px;height:376px;border:1px solid #232323;border-width:1px 2px 2px 1px;background:#333333"></div><div style="left:1448px;top:70px;width:2px;height:847px;background:#2b2b2b"></div><div style="left:708px;top:111px;width:125px;height:23px;background:#333333;border:1px solid #262626;border-bottom:none;border-radius:3px 3px 0 0"></div><div class="t" style="left:722px;top:115px;color:#d4d4d4;font-size:15px;letter-spacing:-0.2px">GeoReference</div><div style="left:834px;top:112px;width:65px;height:22px;background:#292929;border-radius:3px 3px 0 0"></div><div class="t" style="left:848px;top:117px;color:#d4d4d4;font-size:15px;letter-spacing:0.6px">Node</div><div style="left:708px;top:133px;width:125px;height:2px;background:#333333"></div><div class="t" style="right:624px;top:153px;color:#d0d0d0;font-size:15px;letter-spacing:0.1px">Path</div><div style="left:835px;top:148px;width:596px;height:27px;background:#393939;border:1px solid #2a2a2a;border-top-color:#1f1f1f;border-radius:2px"></div><div class="t" style="left:839px;top:153px;color:#d6d6d6;font-size:15.5px;letter-spacing:0.12px;line-height:16px">{nodename}</div><div style="left:835px;top:182px;width:17px;height:17px;background:#2a2a2a;border:1px solid #222"></div><svg style="position:absolute;left:836px;top:183px;" width="15" height="15" viewBox="0 0 15 15"><path d="M3.5 3.5L11.5 11.5M11.5 3.5L3.5 11.5" stroke="#d8d8d8" stroke-width="3"/></svg><div class="t" style="left:858px;top:183px;color:#d0d0d0;font-size:15px;letter-spacing:0.1px">Create Missing Parents:</div><div style="left:1030px;top:178px;width:78px;height:26px;background:linear-gradient(#4a4a4a,#3e3e3e);border:1px solid #262626;border-radius:3px"></div><div class="t" style="left:1035px;top:183px;color:#d6d6d6;font-size:15px;letter-spacing:0.2px">Xform</div><svg style="position:absolute;left:1088px;top:187px;" width="12" height="8" viewBox="0 0 12 8"><path d="M1 1.5H11L6 7Z" fill="#a8a8a8"/></svg><div style="left:720px;top:216px;width:711px;height:1px;background:#262626"></div><div style="left:720px;top:217px;width:711px;height:1px;background:#444"></div><div class="t" style="right:624px;top:237px;color:#d0d0d0;font-size:15px;letter-spacing:0.1px">Reference Type</div><div style="left:835px;top:232px;width:103px;height:26px;background:linear-gradient(#4a4a4a,#3e3e3e);border:1px solid #262626;border-radius:3px"></div><div class="t" style="left:840px;top:237px;color:#d6d6d6;font-size:15px;letter-spacing:0.2px">Reference</div><svg style="position:absolute;left:918px;top:241px;" width="12" height="8" viewBox="0 0 12 8"><path d="M1 1.5H11L6 7Z" fill="#a8a8a8"/></svg><div class="t" style="right:624px;top:267px;color:#d0d0d0;font-size:15px;letter-spacing:0.1px">Operation</div><div style="left:835px;top:262px;width:133px;height:26px;background:linear-gradient(#4a4a4a,#3e3e3e);border:1px solid #262626;border-radius:3px"></div><div class="t" style="left:840px;top:267px;color:#d6d6d6;font-size:15px;letter-spacing:0.2px">Prepend Back</div><svg style="position:absolute;left:948px;top:271px;" width="12" height="8" viewBox="0 0 12 8"><path d="M1 1.5H11L6 7Z" fill="#a8a8a8"/></svg><div class="t" style="right:624px;top:297px;color:#d0d0d0;font-size:15px;letter-spacing:0.1px">File Path</div><div style="left:835px;top:292px;width:568px;height:26px;background:#393939;border:1px solid #2a2a2a;border-top-color:#1f1f1f;border-radius:2px"></div><div class="t" style="left:839px;top:297px;color:#d6d6d6;font-size:15.5px;letter-spacing:0.12px;line-height:16px">C:/Users/Documents/Practice/minibot.usd</div><svg style="position:absolute;left:1411px;top:294px;" width="22" height="22" viewBox="0 0 22 22"><path d="M2.5 3.5Q2.5 1.5 4.5 1.5H9.5L11 3H19Q20.5 3 20.5 4.5V19.5Q20.5 20.5 19.5 20.5L18.5 20.5L17.5 6H3Z" fill="#f2f2f2"/><path d="M2 5.5H18L19.5 20H4.5Q3 20 2.8 18.5Z" fill="#050505"/></svg><div class="t" style="right:624px;top:327px;color:#d0d0d0;font-size:15px;letter-spacing:0.1px">Prim Path</div><div style="left:835px;top:322px;width:568px;height:26px;background:#393939;border:1px solid #2a2a2a;border-top-color:#1f1f1f;border-radius:2px"></div><div class="t" style="left:839px;top:327px;color:#d6d6d6;font-size:15.5px;letter-spacing:0.12px;line-height:16px">/root/world/geo/asset/Baby_Bot/Baby_Bot_Shape/Arms</div><div style="left:1408px;top:322px;width:24px;height:23px;background:#464646;border-radius:3px;border:1px solid #2a2a2a"></div><svg style="position:absolute;left:1408px;top:322px;" width="24" height="23" viewBox="0 0 24 23"><path d="M2.5 3.5H10.5" stroke="#d4d4d4" stroke-width="2"/><path d="M5 3V18.5" stroke="#d4d4d4" stroke-width="1.6"/><path d="M5.5 10.5H16.5" stroke="#c8c8c8" stroke-width="2.2"/><path d="M5.5 17H20" stroke="#d4d4d4" stroke-width="2.6"/></svg><div style="left:835px;top:352px;width:98px;height:29px;background:linear-gradient(#474747,#3d3d3d);border:1px solid #222;border-radius:3px"></div><div class="t" style="left:862px;top:358px;color:#d8d8d8;font-size:15px;letter-spacing:0px">Reload</div><div class="t" style="right:624px;top:388px;color:#d0d0d0;font-size:15px;letter-spacing:0.1px">Time Mapping</div><div style="left:835px;top:394px;width:596px;height:1px;background:#262626"></div><div style="left:835px;top:395px;width:596px;height:1px;background:#4a4a4a"></div><div class="t" style="right:624px;top:416px;color:#d0d0d0;font-size:15px;letter-spacing:0.1px">Offset</div><div style="left:835px;top:411px;width:91px;height:25px;background:#393939;border:1px solid #2a2a2a;border-top-color:#1f1f1f;border-radius:2px"></div><div class="t" style="left:839px;top:417px;color:#d6d6d6;font-size:14px;letter-spacing:0.12px;line-height:16px">0</div><div class="t" style="right:624px;top:443px;color:#d0d0d0;font-size:15px;letter-spacing:0.1px">Scale</div><div style="left:835px;top:439px;width:91px;height:25px;background:#393939;border:1px solid #2a2a2a;border-top-color:#1f1f1f;border-radius:2px"></div><div class="t" style="left:839px;top:445px;color:#d6d6d6;font-size:14px;letter-spacing:0.12px;line-height:16px">1</div><div style="left:930px;top:420px;width:498px;height:4px;background:#0a0a0a"></div><div style="left:930px;top:422px;width:498px;height:1px;background:#4a4a4a"></div><div style="left:929px;top:413px;width:1px;height:6px;background:#1e1e1e"></div><div class="s" style="left:929px;top:425px;">0</div><div style="left:979px;top:413px;width:1px;height:6px;background:#1e1e1e"></div><div class="s" style="left:979px;top:425px;">0.1</div><div style="left:1029px;top:413px;width:1px;height:6px;background:#1e1e1e"></div><div class="s" style="left:1029px;top:425px;">0.2</div><div style="left:1078px;top:413px;width:1px;height:6px;background:#1e1e1e"></div><div class="s" style="left:1078px;top:425px;">0.3</div><div style="left:1128px;top:413px;width:1px;height:6px;background:#1e1e1e"></div><div class="s" style="left:1128px;top:425px;">0.4</div><div style="left:1178px;top:413px;width:1px;height:6px;background:#1e1e1e"></div><div class="s" style="left:1178px;top:425px;">0.5</div><div style="left:1228px;top:413px;width:1px;height:6px;background:#1e1e1e"></div><div class="s" style="left:1228px;top:425px;">0.6</div><div style="left:1278px;top:413px;width:1px;height:6px;background:#1e1e1e"></div><div class="s" style="left:1278px;top:425px;">0.7</div><div style="left:1327px;top:413px;width:1px;height:6px;background:#1e1e1e"></div><div class="s" style="left:1327px;top:425px;">0.8</div><div style="left:1377px;top:413px;width:1px;height:6px;background:#1e1e1e"></div><div class="s" style="left:1377px;top:425px;">0.9</div><div style="left:1427px;top:413px;width:1px;height:6px;background:#1e1e1e"></div><div class="s" style="left:1424px;top:425px;">1</div><div style="left:928px;top:414px;width:5px;height:12px;background:#9a8238;border:1px solid #2a2410"></div><div style="left:930px;top:448px;width:498px;height:4px;background:#0a0a0a"></div><div style="left:930px;top:450px;width:498px;height:1px;background:#4a4a4a"></div><div style="left:929px;top:441px;width:1px;height:6px;background:#1e1e1e"></div><div class="s" style="left:929px;top:453px;">0</div><div style="left:979px;top:441px;width:1px;height:6px;background:#1e1e1e"></div><div class="s" style="left:979px;top:453px;">0.1</div><div style="left:1029px;top:441px;width:1px;height:6px;background:#1e1e1e"></div><div class="s" style="left:1029px;top:453px;">0.2</div><div style="left:1078px;top:441px;width:1px;height:6px;background:#1e1e1e"></div><div class="s" style="left:1078px;top:453px;">0.3</div><div style="left:1128px;top:441px;width:1px;height:6px;background:#1e1e1e"></div><div class="s" style="left:1128px;top:453px;">0.4</div><div style="left:1178px;top:441px;width:1px;height:6px;background:#1e1e1e"></div><div class="s" style="left:1178px;top:453px;">0.5</div><div style="left:1228px;top:441px;width:1px;height:6px;background:#1e1e1e"></div><div class="s" style="left:1228px;top:453px;">0.6</div><div style="left:1278px;top:441px;width:1px;height:6px;background:#1e1e1e"></div><div class="s" style="left:1278px;top:453px;">0.7</div><div style="left:1327px;top:441px;width:1px;height:6px;background:#1e1e1e"></div><div class="s" style="left:1327px;top:453px;">0.8</div><div style="left:1377px;top:441px;width:1px;height:6px;background:#1e1e1e"></div><div class="s" style="left:1377px;top:453px;">0.9</div><div style="left:1427px;top:441px;width:1px;height:6px;background:#1e1e1e"></div><div class="s" style="left:1424px;top:453px;">1</div><div style="left:1424px;top:442px;width:5px;height:12px;background:#9a8238;border:1px solid #2a2410"></div><div style="left:1444px;top:497px;width:2px;height:2px;background:#8a8a8a"></div><div style="left:1444px;top:501px;width:2px;height:2px;background:#8a8a8a"></div><div style="left:1444px;top:504px;width:2px;height:2px;background:#8a8a8a"></div><div style="left:1441px;top:501px;width:2px;height:2px;background:#8a8a8a"></div><div style="left:1441px;top:504px;width:2px;height:2px;background:#8a8a8a"></div><div style="left:1437px;top:504px;width:2px;height:2px;background:#8a8a8a"></div></body></html>
